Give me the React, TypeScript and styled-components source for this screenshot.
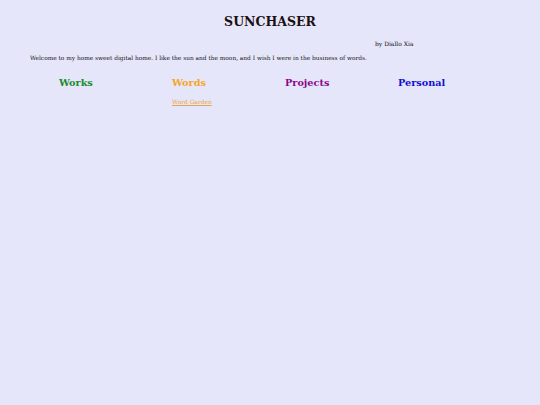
import styled, { createGlobalStyle } from "styled-components";

const GlobalStyle = createGlobalStyle`
  html, body {
    margin: 0;
    padding: 0;
    background: #e6e6fa;
  }
  body {
    font-family: "DejaVu Serif", Georgia, serif;
    color: #111;
  }
`;

const Page = styled.div`
  width: 540px;
  min-height: 405px;
  padding-top: 14px;
  box-sizing: border-box;
`;

const Title = styled.h1`
  margin: 0;
  text-align: center;
  font-size: 12.5px;
  line-height: 15px;
  font-weight: bold;
  color: #1a1010;
`;

const Byline = styled.p`
  margin: 11px 0 0 375px;
  font-size: 6px;
  line-height: 8px;
`;

const Intro = styled.p`
  margin: 6px 0 0 30px;
  font-size: 5.85px;
  line-height: 8px;
`;

const Columns = styled.div`
  display: grid;
  grid-template-columns: repeat(4, 113px);
  padding-left: 59px;
  margin-top: 15px;
`;

const Column = styled.section``;

const Heading = styled.h2<{ $color: string }>`
  margin: 0;
  font-size: 9.7px;
  line-height: 12px;
  font-weight: bold;
  color: ${(p) => p.$color};
`;

const SubLink = styled.a`
  display: inline-block;
  margin-top: 5px;
  font-size: 5.9px;
  line-height: 7px;
  color: #eaa445;
  text-decoration: underline;
`;

const sections = [
  { name: "Works", color: "#1c8a2c", links: [] as string[] },
  { name: "Words", color: "#f5a623", links: ["Word Garden"] },
  { name: "Projects", color: "#8a0a8a", links: [] as string[] },
  { name: "Personal", color: "#1010d0", links: [] as string[] },
];

const App = () => {
  return (
    <>
      <GlobalStyle />
      <Page>
        <Title>SUNCHASER</Title>
        <Byline>by Diallo Xia</Byline>
        <Intro>
          Welcome to my home sweet digital home. I like the sun and the moon,
          and I wish I were in the business of words.
        </Intro>
        <Columns>
          {sections.map((s) => (
            <Column key={s.name}>
              <Heading $color={s.color}>{s.name}</Heading>
              {s.links.map((l) => (
                <SubLink key={l} href="#">
                  {l}
                </SubLink>
              ))}
            </Column>
          ))}
        </Columns>
      </Page>
    </>
  );
};

export default App;
